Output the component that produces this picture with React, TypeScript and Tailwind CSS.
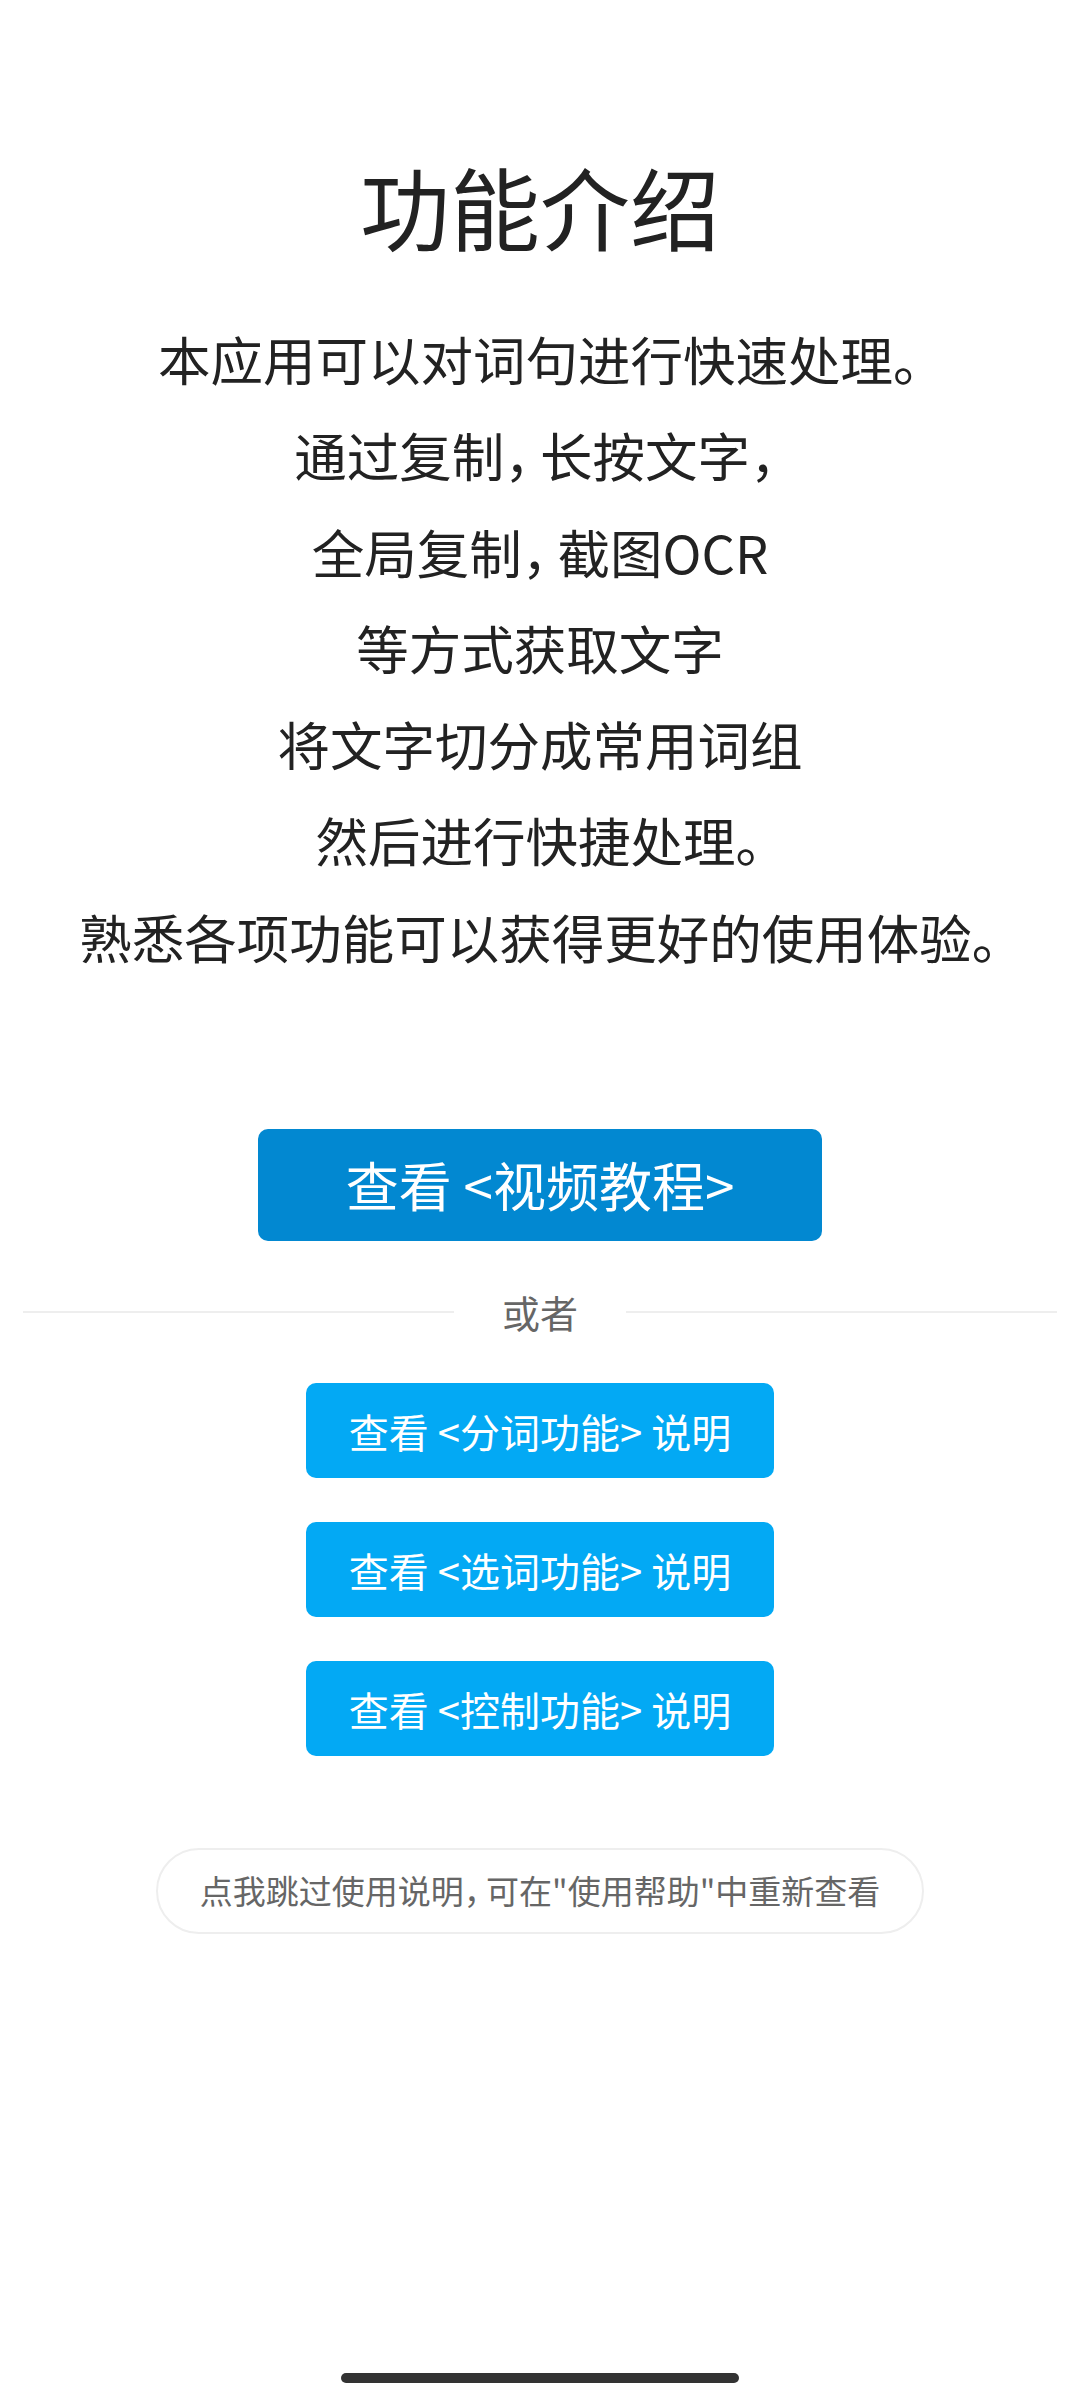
const lines = [
  '本应用可以对词句进行快速处理。',
  '通过复制，长按文字，',
  '全局复制，截图OCR',
  '等方式获取文字',
  '将文字切分成常用词组',
  '然后进行快捷处理。',
  '熟悉各项功能可以获得更好的使用体验。',
];

const guides = ['分词功能', '选词功能', '控制功能'];

// full-width punctuation is set narrow, like the phone font does
function Narrow({ text }: { text: string }) {
  return (
    <>
      {text.split(/([，。])/).map((part, i) => {
        if (part === '，') {
          return (
            <span key={i} className="tracking-[-0.32em]">
              {part}
            </span>
          );
        }
        if (part === '。') {
          return (
            <span key={i} className="tracking-[-0.45em]">
              {part}
            </span>
          );
        }
        return part;
      })}
    </>
  );
}

function App() {
  return (
    <div className="flex h-[2400px] w-[1080px] flex-col items-center bg-white font-['Noto_Sans_CJK_SC','Noto_Sans',sans-serif] text-[#222222]">
      {/* Title */}
      <h1 className="mt-[152px] text-[90px] leading-[106px] font-normal">功能介绍</h1>

      {/* Intro text */}
      <div className="mt-[52px] flex flex-col items-center text-[52.5px] leading-[96.3px]">
        {lines.map((line) => (
          <p key={line}>
            <Narrow text={line} />
          </p>
        ))}
      </div>

      {/* Video tutorial */}
      <button className="mt-[145px] flex h-[112px] w-[564px] items-center justify-center rounded-[10px] bg-[#0288d1] text-[53px] text-white">
        查看 &lt;视频教程&gt;
      </button>

      {/* Divider */}
      <div className="mt-[46px] flex h-[50px] w-full items-center px-[23px]">
        <div className="h-[2px] flex-1 bg-[#eeeeee]" />
        <span className="mx-[48px] text-[38px] leading-[50px] text-[#666666]">或者</span>
        <div className="h-[2px] flex-1 bg-[#eeeeee]" />
      </div>

      {/* Feature guides */}
      <div className="mt-[46px] flex flex-col items-center gap-[44px]">
        {guides.map((g) => (
          <button
            key={g}
            className="flex h-[95px] w-[468px] items-center justify-center rounded-[10px] bg-[#03a9f4] text-[40px] text-white"
          >
            查看 &lt;{g}&gt; 说明
          </button>
        ))}
      </div>

      {/* Skip */}
      <button className="mt-[92px] flex h-[86px] w-[768px] items-center justify-center rounded-full border-2 border-[#eeeeee] text-[33px] text-[#666666]">
        <Narrow text={'点我跳过使用说明，可在"使用帮助"中重新查看'} />
      </button>

      {/* Home indicator */}
      <div className="mt-auto mb-[17px] h-[10px] w-[398px] rounded-full bg-[#333333]" />
    </div>
  );
}

export default App;
